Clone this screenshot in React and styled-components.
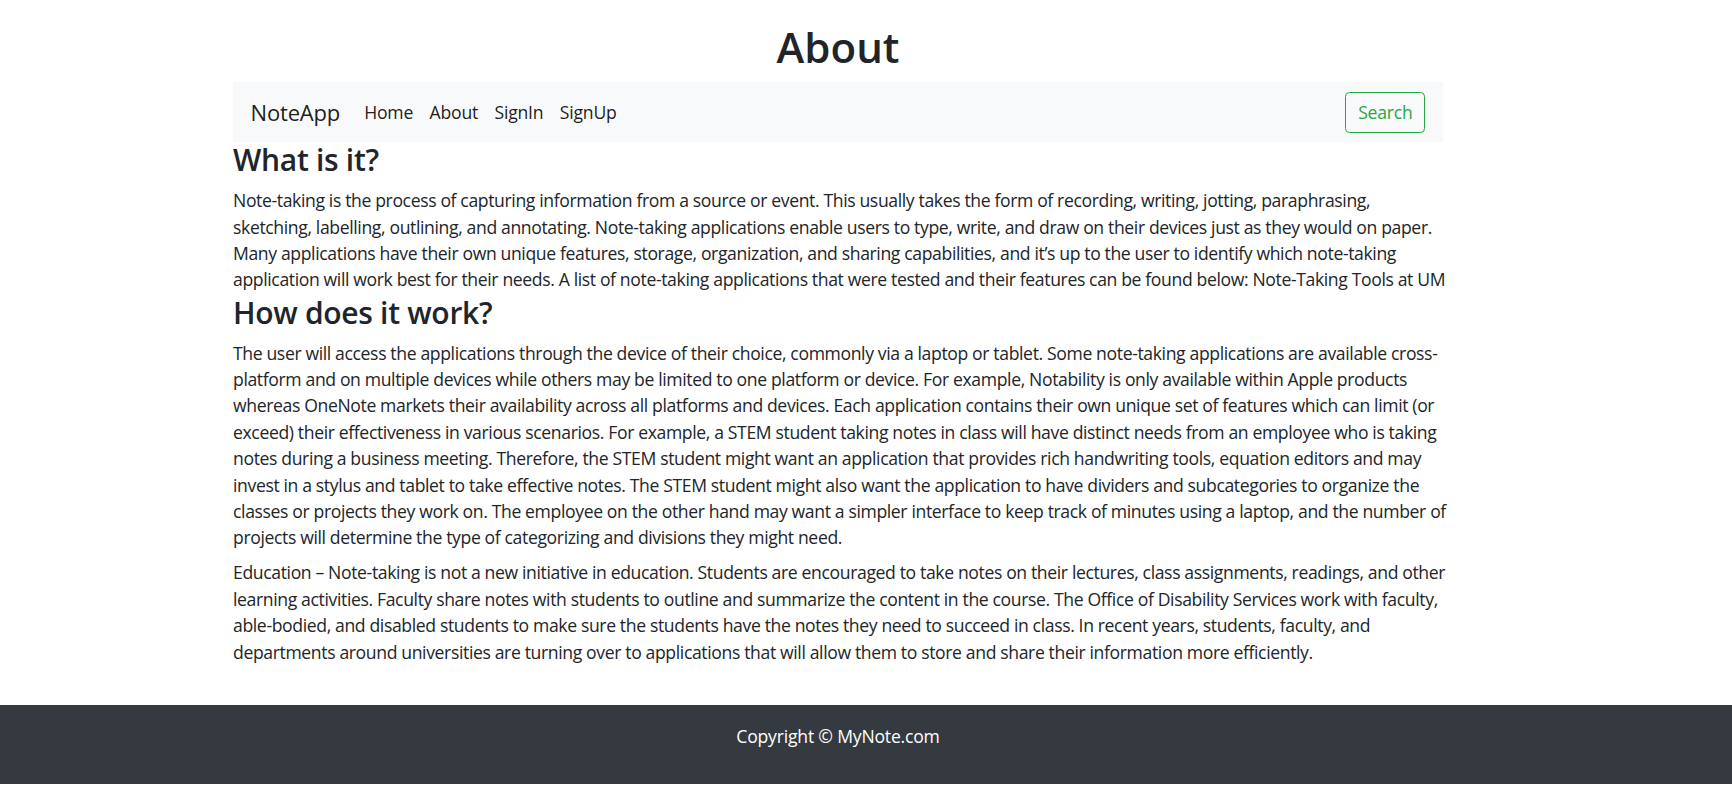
import React from "react";
import styled, { createGlobalStyle } from "styled-components";

const GlobalStyle = createGlobalStyle`
  body {
    margin: 0;
    font-family: "Open Sans", "Noto Sans", sans-serif;
    font-size: 17.6px;
    line-height: 1.5;
    color: #212529;
    background: #fff;
  }
  * {
    box-sizing: border-box;
  }
`;

const links = ["Home", "About", "SignIn", "SignUp"];

// lines kept as in the original page so the wrapping stays the same
const whatIsIt = [
  "Note-taking is the process of capturing information from a source or event. This usually takes the form of recording, writing, jotting, paraphrasing,",
  "sketching, labelling, outlining, and annotating. Note-taking applications enable users to type, write, and draw on their devices just as they would on paper.",
  "Many applications have their own unique features, storage, organization, and sharing capabilities, and it’s up to the user to identify which note-taking",
  "application will work best for their needs. A list of note-taking applications that were tested and their features can be found below: Note-Taking Tools at UM",
];

const howItWorks = [
  "The user will access the applications through the device of their choice, commonly via a laptop or tablet. Some note-taking applications are available cross-",
  "platform and on multiple devices while others may be limited to one platform or device. For example, Notability is only available within Apple products",
  "whereas OneNote markets their availability across all platforms and devices. Each application contains their own unique set of features which can limit (or",
  "exceed) their effectiveness in various scenarios. For example, a STEM student taking notes in class will have distinct needs from an employee who is taking",
  "notes during a business meeting. Therefore, the STEM student might want an application that provides rich handwriting tools, equation editors and may",
  "invest in a stylus and tablet to take effective notes. The STEM student might also want the application to have dividers and subcategories to organize the",
  "classes or projects they work on. The employee on the other hand may want a simpler interface to keep track of minutes using a laptop, and the number of",
  "projects will determine the type of categorizing and divisions they might need.",
];

const education = [
  "Education – Note-taking is not a new initiative in education. Students are encouraged to take notes on their lectures, class assignments, readings, and other",
  "learning activities. Faculty share notes with students to outline and summarize the content in the course. The Office of Disability Services work with faculty,",
  "able-bodied, and disabled students to make sure the students have the notes they need to succeed in class. In recent years, students, faculty, and",
  "departments around universities are turning over to applications that will allow them to store and share their information more efficiently.",
];

const Paragraph = ({ lines, gap }) => {
  return (
    <Text $gap={gap}>
      {lines.map((line, index) => {
        return <Line key={index}>{line}</Line>;
      })}
    </Text>
  );
};

const App = () => {
  return (
    <>
      <GlobalStyle />
      <Container>
        <Title>About</Title>
        <Navbar>
          <Brand href="#">NoteApp</Brand>
          <NavList>
            {links.map((link) => {
              return (
                <NavLink key={link} href="#">
                  {link}
                </NavLink>
              );
            })}
          </NavList>
          <SearchButton type="button">Search</SearchButton>
        </Navbar>
        <Heading>What is it?</Heading>
        <Paragraph lines={whatIsIt} gap="2px" />
        <Heading>How does it work?</Heading>
        <Paragraph lines={howItWorks} gap="8.8px" />
        <Paragraph lines={education} gap="0" />
      </Container>
      <Footer>
        <Container>
          <Copyright>Copyright © MyNote.com</Copyright>
        </Container>
      </Footer>
    </>
  );
};

const Container = styled.div`
  width: 1210px;
  margin-left: 233px;
`;

const Title = styled.h1`
  margin: 22px 0 10px;
  text-align: center;
  font-size: 42px;
  font-weight: 600;
  line-height: 1.2;
`;

const Navbar = styled.nav`
  display: flex;
  align-items: center;
  height: 60px;
  padding: 0 17.6px;
  background: #f8f9fa;
`;

const Brand = styled.a`
  margin-right: 16px;
  font-size: 22px;
  color: rgba(0, 0, 0, 0.9);
  text-decoration: none;
  letter-spacing: -0.2px;
`;

const NavList = styled.div`
  display: flex;
  align-items: center;
`;

const NavLink = styled.a`
  padding: 0 8.2px;
  color: rgba(0, 0, 0, 0.9);
  text-decoration: none;
  letter-spacing: -0.2px;
`;

const SearchButton = styled.button`
  margin-left: auto;
  width: 80px;
  height: 41px;
  padding: 0;
  border: 1px solid #28a745;
  border-radius: 4.4px;
  background: transparent;
  color: #28a745;
  font-family: inherit;
  font-size: 17.6px;
  letter-spacing: -0.2px;
`;

const Heading = styled.h3`
  margin: 0 0 8.8px;
  font-size: 30px;
  font-weight: 600;
  line-height: 1.2;
  letter-spacing: -0.3px;
`;

const Text = styled.p`
  margin: 0 0 ${(props) => props.$gap};
  letter-spacing: -0.37px;
`;

const Line = styled.span`
  display: block;
  white-space: nowrap;
`;

const Footer = styled.footer`
  margin-top: 40px;
  padding: 17.6px 0;
  background: #343a40;
`;

const Copyright = styled.p`
  margin: 0 0 17.6px;
  text-align: center;
  color: #fff;
  letter-spacing: -0.2px;
`;

export default App;
